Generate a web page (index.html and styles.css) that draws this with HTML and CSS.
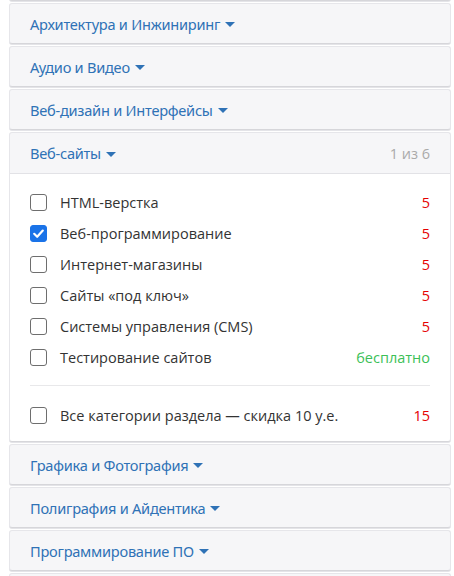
FILE: index.html
```html
<!DOCTYPE html>
<html lang="ru">
<head>
<meta charset="utf-8">
<link rel="stylesheet" href="styles.css">
</head>
<body>
<div class="list">
  <div class="panel prev"><div class="head"></div></div>
  <div class="panel"><div class="head"><span class="title">Архитектура и Инжиниринг<i class="caret"></i></span></div></div>
  <div class="panel"><div class="head"><span class="title">Аудио и Видео<i class="caret"></i></span></div></div>
  <div class="panel"><div class="head"><span class="title">Веб-дизайн и Интерфейсы<i class="caret"></i></span></div></div>
  <div class="panel open">
    <div class="head"><span class="title">Веб-сайты<i class="caret"></i></span><span class="count">1 из 6</span></div>
    <div class="body">
      <label class="row"><span class="box"></span><span class="name">HTML-верстка</span><span class="price">5</span></label>
      <label class="row"><span class="box checked"><svg viewBox="0 0 17 17" width="17" height="17"><path d="M4.2 8.8 L7.2 11.8 L12.8 5.6" fill="none" stroke="#fff" stroke-width="2.2" stroke-linecap="round" stroke-linejoin="round"/></svg></span><span class="name">Веб-программирование</span><span class="price">5</span></label>
      <label class="row"><span class="box"></span><span class="name">Интернет-магазины</span><span class="price">5</span></label>
      <label class="row"><span class="box"></span><span class="name">Сайты «под ключ»</span><span class="price">5</span></label>
      <label class="row"><span class="box"></span><span class="name">Системы управления (CMS)</span><span class="price">5</span></label>
      <label class="row"><span class="box"></span><span class="name">Тестирование сайтов</span><span class="price free">бесплатно</span></label>
      <div class="sep"></div>
      <label class="row"><span class="box"></span><span class="name">Все категории раздела — скидка 10 у.е.</span><span class="price">15</span></label>
    </div>
  </div>
  <div class="panel"><div class="head"><span class="title">Графика и Фотография<i class="caret"></i></span></div></div>
  <div class="panel"><div class="head"><span class="title">Полиграфия и Айдентика<i class="caret"></i></span></div></div>
  <div class="panel"><div class="head"><span class="title">Программирование ПО<i class="caret"></i></span></div></div>
  <div class="panel"><div class="head"></div></div>
</div>
</body>
</html>
```
FILE: styles.css
```css
html, body {
  margin: 0;
  padding: 0;
  background: #ffffff;
  overflow: hidden;
  height: 576px;
}
body {
  font-family: "Open Sans", "Noto Sans", sans-serif;
  color: #333;
}
.list {
  display: flex;
  flex-direction: column;
  gap: 2px;
  padding: 0 3px 0 9px;
  margin-top: -40px;
}
.panel {
  border: 1px solid #e6e6ea;
  border-bottom-color: #d6d6da;
  border-radius: 3px;
  background: #f6f6f8;
  box-shadow: 0 1px 0 #e4e4e8;
}
.head {
  height: 39px;
  display: flex;
  align-items: center;
  justify-content: space-between;
  padding: 0 20px;
  box-sizing: border-box;
}
.title {
  font-family: "Noto Sans", sans-serif;
  font-size: 14.6px;
  color: #2f72b6;
  display: flex;
  align-items: center;
  letter-spacing: -0.25px;
}
.caret {
  display: inline-block;
  width: 0;
  height: 0;
  margin-left: 5px;
  margin-top: 2px;
  border-left: 5px solid transparent;
  border-right: 5px solid transparent;
  border-top: 5px solid #2f72b6;
}
.count {
  font-size: 14.5px;
  color: #aaaaaa;
}
.open .head {
  border-bottom: 1px solid #e2e2e6;
  height: 41px;
}
.open .body {
  background: #fff;
  padding: 13px 20px 10px;
  border-radius: 0 0 3px 3px;
}
.row {
  height: 31px;
  display: flex;
  align-items: center;
  font-size: 14.5px;
}
.box {
  width: 17px;
  height: 17px;
  box-sizing: border-box;
  border: 1px solid #6e6e6e;
  border-radius: 3px;
  margin-right: 13px;
  flex: none;
  display: flex;
}
.box.checked {
  background: #1a73e8;
  border-color: #1a73e8;
}
.box.checked svg {
  margin: -1px;
}
.name {
  flex: 1;
  color: #333;
}
.price {
  color: #e50000;
}
.price.free {
  color: #3cbf58;
}
.sep {
  height: 1px;
  background: #e8e8ea;
  margin: 12px 0 14px;
}
```
